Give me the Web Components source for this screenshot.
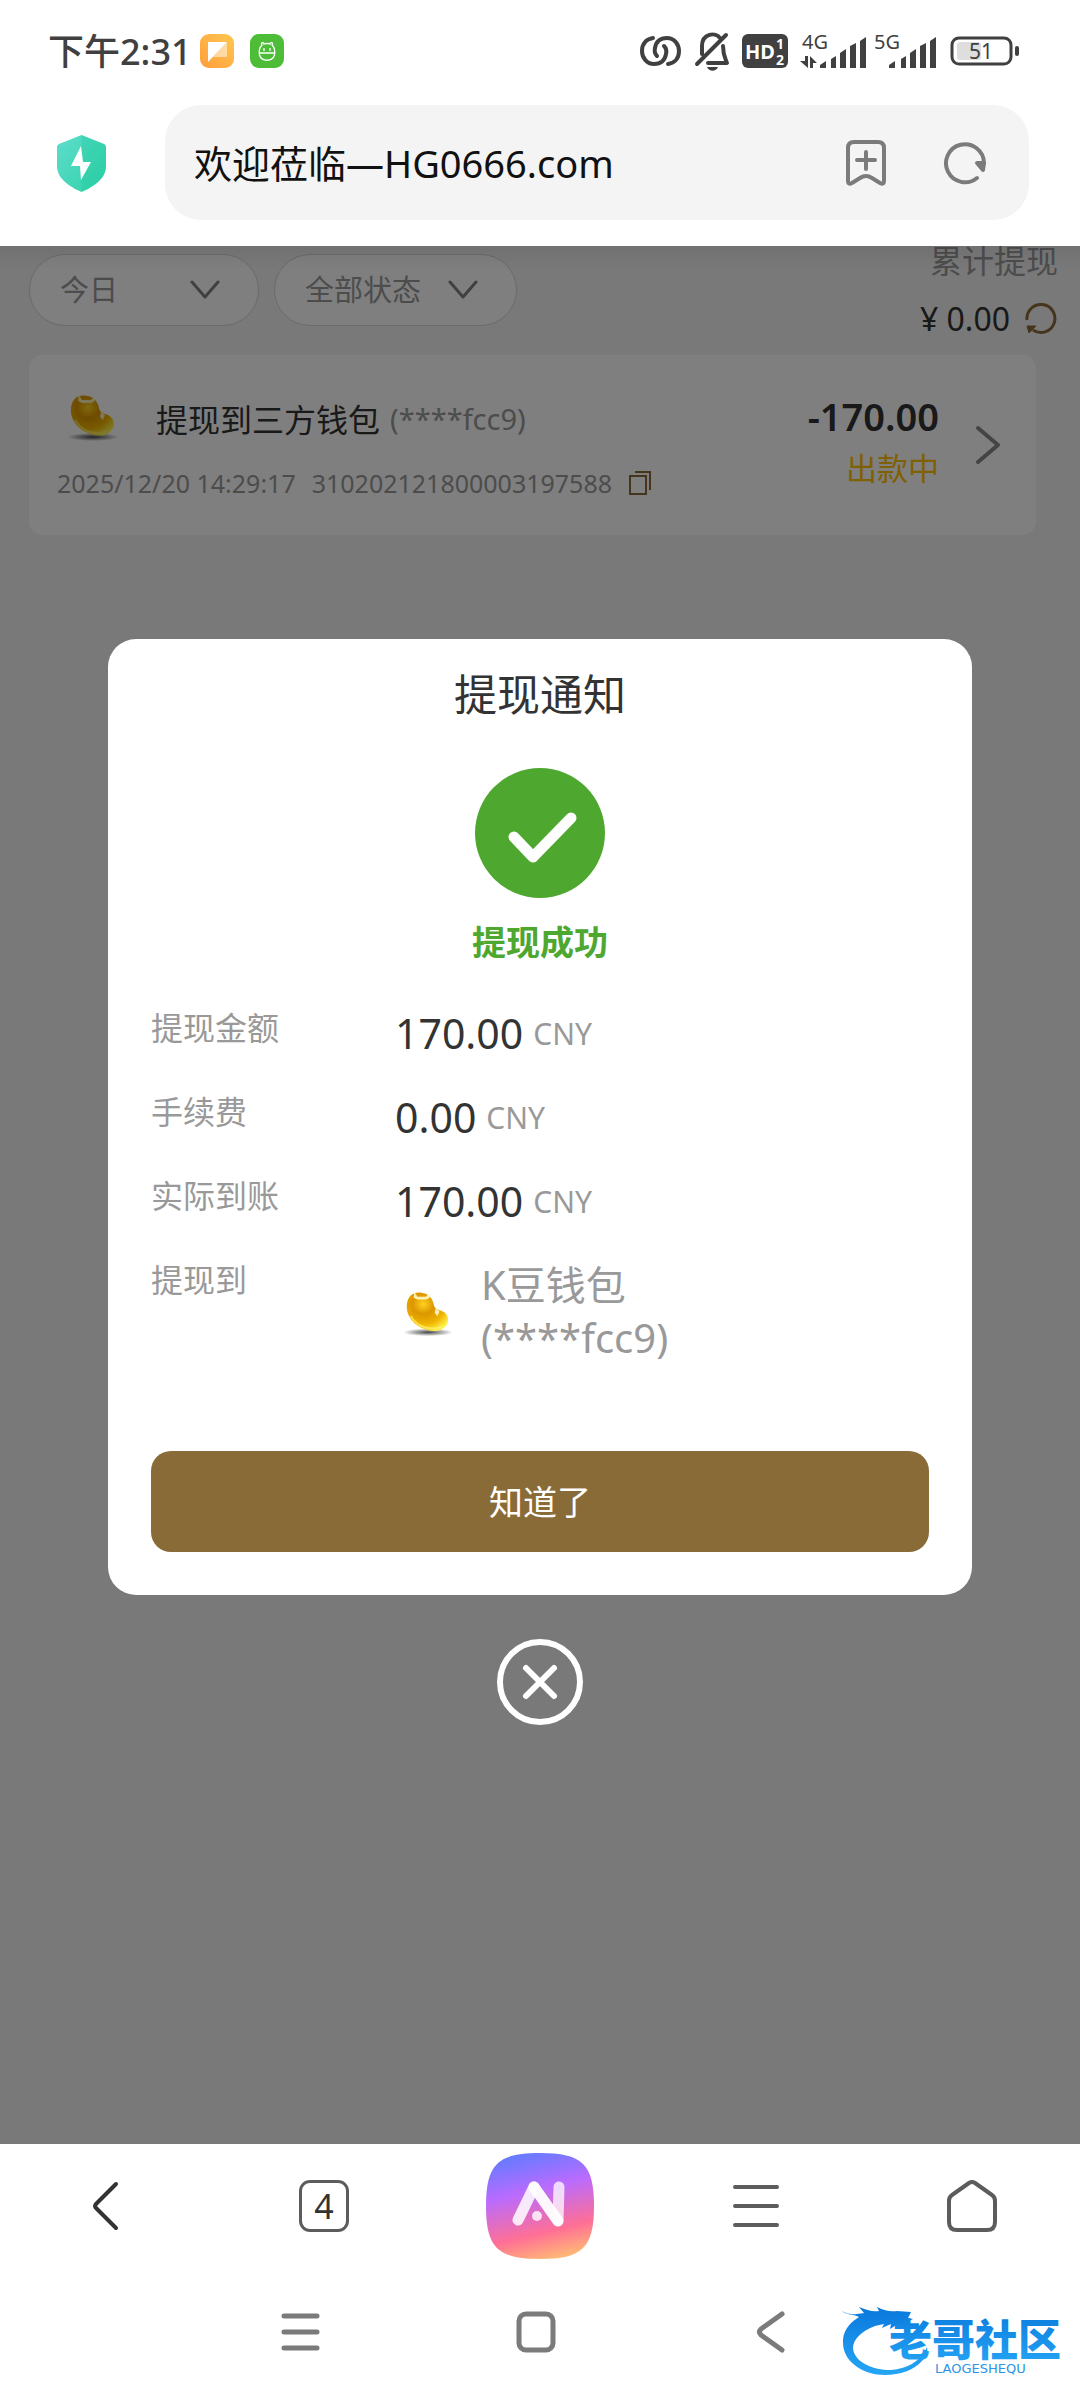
<!DOCTYPE html>
<html lang="zh-CN">
<head>
<meta charset="utf-8">
<meta name="viewport" content="width=device-width, initial-scale=1">
<title>提现通知</title>
<style>
  body {
    margin: 0;
    min-height: 100vh;
    display: flex;
    flex-direction: column;
    background: #fff;
    color: #333;
    font-family: "Noto Sans", "Noto Sans CJK SC", sans-serif;
  }
  record-page { flex: 1; }
</style>
</head>
<body>
  <status-bar></status-bar>
  <address-bar url="欢迎莅临—HG0666.com"></address-bar>

  <record-page>
    <filter-select label="日期" value="今日" size="230" slot="filters"></filter-select>
    <filter-select label="状态" value="全部状态" size="243" slot="filters"></filter-select>
    <record-card slot="records">
      <span slot="title">提现到三方钱包</span>
      <span slot="account">(****fcc9)</span>
      <span slot="time">2025/12/20 14:29:17</span>
      <span slot="order">310202121800003197588</span>
      <span slot="amount">-170.00</span>
      <span slot="state">出款中</span>
    </record-card>
    <notice-modal slot="modal">
      <span slot="title">提现通知</span>
      <span slot="result">提现成功</span>
      <detail-row label="提现金额"><money-value amount="170.00"></money-value></detail-row>
      <detail-row label="手续费"><money-value amount="0.00"></money-value></detail-row>
      <detail-row label="实际到账"><money-value amount="170.00"></money-value></detail-row>
      <detail-row label="提现到"><wallet-value>K豆钱包<br>(****fcc9)</wallet-value></detail-row>
    </notice-modal>
  </record-page>

  <browser-tools tabs="4"></browser-tools>
  <system-nav><site-mark></site-mark></system-nav>

<script>
  class StatusBar extends HTMLElement {
    constructor() {
      super();
      this.attachShadow({ mode: 'open' }).innerHTML = `
        <style>
          :host {
            display: flex;
            align-items: center;
            justify-content: space-between;
            height: 102px;
            padding: 0 60px 0 48px;
            color: #404040;
          }
          .left, .right { display: flex; align-items: center; }
          .left { gap: 16px; }
          .right { gap: 12px; }
          time { font-size: 36px; font-weight: 500; margin-right: -8px; padding-bottom: 4px; }
          svg { display: block; }
          .net { display: flex; gap: 6px; }
          .net svg { overflow: visible; }
          text { font-family: "Noto Sans", sans-serif; fill: #404040; }
        </style>
        <div class="left">
          <time>下午2:31</time>
          <svg width="34" height="34" viewBox="0 0 34 34">
            <defs><linearGradient id="o" x1="0" y1="1" x2="1" y2="0"><stop offset="0" stop-color="#ff9d3c"/><stop offset="1" stop-color="#ffc850"/></linearGradient></defs>
            <rect width="34" height="34" rx="9" fill="url(#o)"/>
            <path d="M8 8h19L8 28z" fill="#fff"/>
            <path d="M27 8v15H13z" fill="#fff" opacity=".5"/>
          </svg>
          <svg width="34" height="34" viewBox="0 0 34 34" fill="none" stroke="#fff" stroke-width="1.3">
            <rect width="34" height="34" rx="9" fill="#4dbd38" stroke="none"/>
            <path d="M12 11c-2-3 2-3 2 -1q3-1 6 0c0-2 4-2 2 1 3 3 3 7 2.500 10-2 7-13 7-15 0-.5-3-.5-7 2.500-10zM9 19h16M14 14v3M20 14v3"/>
          </svg>
        </div>
        <div class="right">
          <svg width="42" height="32" viewBox="0 0 42 32" fill="none" stroke="#404040" stroke-width="4" stroke-linecap="round">
            <path d="M13 3C6 4 2 9 2 16c0 7 5 13 12 13 7 0 11-4 12-10 1-4 0-6-2-8"/>
            <path d="M28 29c7-1 11-6 11-13C39 9 34 3 27 3c-7 0-11 4-12 10-1 4 0 6 2 8"/>
          </svg>
          <svg width="36" height="40" viewBox="0 0 36 40" fill="none" stroke="#404040" stroke-width="4" stroke-linecap="round" stroke-linejoin="round">
            <path d="M3 33 32 4M26 7C22 1 8 2 8 15v8M29 15c0 9 2 12 4 17H14"/>
            <path d="M13 36h11c-2 5-9 5-11 0z" fill="#404040" stroke="none"/>
          </svg>
          <svg width="46" height="34" viewBox="0 0 46 34">
            <rect width="46" height="34" rx="6" fill="#404040"/>
            <text x="3" y="25" font-size="20" font-weight="700" style="fill:#fff">HD</text>
            <text x="34" y="15" font-size="14" font-weight="700" style="fill:#fff">1</text>
            <text x="34" y="31" font-size="14" font-weight="700" style="fill:#fff">2</text>
          </svg>
          <div class="net">
            <svg width="68" height="36" viewBox="0 0 68 36" fill="#404040">
              <text x="2" y="16" font-size="20">4G</text>
              <path d="M5 23h3v12L0 28h5zM10 23l7 7h-4v5h-3z"/>
              <path d="M20 32l6-4v7h-6zM31 26l5-3v12h-5zM40 20l6-4v19h-6zM50 13l6-3v25h-6zM60 8l6-4v31h-6z"/>
            </svg>
            <svg width="64" height="36" viewBox="0 0 64 36" fill="#404040">
              <text x="0" y="16" font-size="20">5G</text>
              <path d="M15 32l6-4v7h-6zM27 26l5-3v12h-5zM36 20l6-4v19h-6zM46 13l6-3v25h-6zM56 8l6-4v31h-6z"/>
            </svg>
          </div>
          <svg width="70" height="30" viewBox="0 0 70 30">
            <rect x="2" y="2" width="59" height="26" rx="7" fill="#fff" stroke="#404040" stroke-width="3"/>
            <rect x="7" y="6" width="24" height="18" rx="3" fill="#dedede"/>
            <rect x="65" y="10" width="4" height="10" rx="2" fill="#404040"/>
            <text x="31" y="23" font-size="21" text-anchor="middle">51</text>
          </svg>
        </div>
      `;
    }
  }
  customElements.define('status-bar', StatusBar);

  class AddressBar extends HTMLElement {
    constructor() {
      super();
      this.attachShadow({ mode: 'open' }).innerHTML = `
        <style>
          :host {
            display: flex;
            align-items: center;
            gap: 58px;
            padding: 3px 51px 26px 56px;
          }
          svg { display: block; flex: none; }
          .box {
            flex: 1;
            min-width: 0;
            height: 115px;
            box-sizing: border-box;
            display: flex;
            align-items: center;
            gap: 54px;
            padding: 0 42px 0 29px;
            border-radius: 36px;
            background: #f4f4f4;
          }
          input {
            flex: 1;
            min-width: 0;
            padding: 0;
            border: 0;
            outline: 0;
            background: none;
            color: #111;
            font: 38px/56px "Noto Sans", "Noto Sans CJK SC", sans-serif;
          }
          button { padding: 0; border: 0; background: none; }
        </style>
        <svg width="51" height="58" viewBox="0 0 51 58">
          <defs><linearGradient id="s" x2="1" y2="1"><stop stop-color="#5fdccd"/><stop offset="1" stop-color="#2ed3a6"/></linearGradient></defs>
          <path d="M25.500 1 48 10q2 1 2 3v19c0 12-11 20-24.500 26C12 52 1 44 1 32V13q0-2 2-3z" fill="url(#s)"/>
          <path d="M25.500 1 48 10q2 1 2 3v19c0 12-11 20-24.500 26z" fill="#1fc79a" opacity=".3"/>
          <path d="M25 12 15 32h9l1 14 10-18h-8z" fill="#fff"/>
        </svg>
        <div class="box">
          <input type="text" aria-label="网址">
          <button aria-label="收藏">
            <svg width="46" height="46" viewBox="0 0 46 46" fill="none" stroke="#7b7b7b" stroke-width="4" stroke-linecap="round" stroke-linejoin="round">
              <path d="M5 8q0-6 6-6h24q6 0 6 6v33q0 4-4 2l-8-5q-6-4-12 0l-8 5q-4 2-4-2zM23 12v17M14 20h18"/>
            </svg>
          </button>
          <button aria-label="刷新">
            <svg width="44" height="44" viewBox="0 0 44 44" fill="none" stroke="#7b7b7b" stroke-width="4" stroke-linecap="round" stroke-linejoin="round">
              <path d="M34 37A19 19 0 1 1 41 22"/>
              <path d="M34 22h7l-1 7z" fill="#7b7b7b"/>
            </svg>
          </button>
        </div>
      `;
    }
    connectedCallback() {
      const input = this.shadowRoot.querySelector('input');
      input.value = this.getAttribute('url');
      input.setAttribute('value', this.getAttribute('url'));
    }
  }
  customElements.define('address-bar', AddressBar);

  class FilterSelect extends HTMLElement {
    constructor() {
      super();
      this.attachShadow({ mode: 'open' }).innerHTML = `
        <style>
          :host { display: block; }
          label {
            display: flex;
            align-items: center;
            justify-content: space-between;
            height: 72px;
            box-sizing: border-box;
            padding: 0 38px 0 30px;
            border: 1px solid #d4d4d4;
            border-radius: 36px;
            background: #fff;
          }
          select {
            flex: 1;
            min-width: 0;
            appearance: none;
            border: 0;
            padding: 0;
            background: none;
            color: #999;
            font: 29px/42px "Noto Sans", "Noto Sans CJK SC", sans-serif;
          }
          svg { flex: none; }
        </style>
        <label>
          <select><option></option></select>
          <svg width="30" height="20" viewBox="0 0 30 20" fill="none" stroke="#808080" stroke-width="3" stroke-linecap="round" stroke-linejoin="round"><path d="M2 2l13 15L28 2"/></svg>
        </label>
      `;
    }
    connectedCallback() {
      this.shadowRoot.querySelector('option').textContent = this.getAttribute('value');
      this.shadowRoot.querySelector('select').setAttribute('aria-label', this.getAttribute('label'));
      this.style.width = this.getAttribute('size') + 'px';
    }
  }
  customElements.define('filter-select', FilterSelect);

  class GoldBean extends HTMLElement {
    constructor() {
      super();
      this.attachShadow({ mode: 'open' }).innerHTML = `
        <style>
          :host { display: block; flex: none; width: 52px; }
          svg { display: block; width: 100%; }
        </style>
        <svg viewBox="0 0 52 50">
          <defs>
            <radialGradient id="a" cx=".4" cy=".3" r=".75"><stop offset="0" stop-color="#ffd21f"/><stop offset=".35" stop-color="#dc9600"/><stop offset=".7" stop-color="#f0b400"/><stop offset="1" stop-color="#fff04a"/></radialGradient>
            <radialGradient id="b"><stop stop-color="#333" stop-opacity=".9"/><stop offset="1" stop-color="#333" stop-opacity="0"/></radialGradient>
          </defs>
          <ellipse cx="26" cy="44" rx="26" ry="4" fill="url(#b)"/>
          <path d="M4 15C5 5 12 1 20 3c8 1 11 7 12 12 1 5 4 5 9 7 7 3 8 12 2 17-7 6-19 4-28-2C7 31 3 23 4 15z" fill="url(#a)"/>
          <path d="M12 2l3 5h9l3-4 1 5-4 2h-9l-4-2zM34 19l4 3-2 5-3-3z" fill="#fff8c8" opacity=".9"/>
          <path d="M8 27c6 11 20 16 32 11" fill="none" stroke="#fff36a" stroke-width="2" opacity=".7"/>
        </svg>
      `;
    }
  }
  customElements.define('gold-bean', GoldBean);

  class RecordCard extends HTMLElement {
    constructor() {
      super();
      this.attachShadow({ mode: 'open' }).innerHTML = `
        <style>
          :host {
            display: flex;
            align-items: center;
            height: 180px;
            box-sizing: border-box;
            padding: 0 35px 0 28px;
            border-radius: 14px;
            background: #fff;
          }
          .info { flex: 1; padding-top: 12px; }
          .name { display: flex; align-items: center; height: 64px; font-size: 32px; }
          gold-bean { margin: 0 37px 0 10px; }
          .account { margin-left: 10px; color: #999; font-size: 29px; }
          .meta { display: flex; align-items: center; gap: 16px; height: 66px; color: #999; font-size: 25px; }
          .sum { text-align: right; padding-bottom: 8px; }
          .amount { font-size: 38px; line-height: 54px; font-weight: 600; }
          .state { font-size: 31px; line-height: 50px; color: #ffc107; }
          button { display: flex; padding: 0; border: 0; background: none; }
          .go { margin-left: 36px; }
        </style>
        <div class="info">
          <div class="name">
            <gold-bean></gold-bean>
            <slot name="title"></slot>
            <span class="account"><slot name="account"></slot></span>
          </div>
          <div class="meta">
            <slot name="time"></slot>
            <slot name="order"></slot>
            <button aria-label="复制">
              <svg width="24" height="26" viewBox="0 0 24 26" fill="none" stroke="#8a6a38" stroke-width="2"><path d="M2 6h16v18H2zM7 2h15v18"/></svg>
            </button>
          </div>
        </div>
        <div class="sum">
          <div class="amount"><slot name="amount"></slot></div>
          <div class="state"><slot name="state"></slot></div>
        </div>
        <button class="go" aria-label="详情">
          <svg width="26" height="40" viewBox="0 0 26 40" fill="none" stroke="#888" stroke-width="4" stroke-linecap="round" stroke-linejoin="round"><path d="M3 3l20 17L3 37"/></svg>
        </button>
      `;
    }
  }
  customElements.define('record-card', RecordCard);

  class RecordPage extends HTMLElement {
    constructor() {
      super();
      this.attachShadow({ mode: 'open' }).innerHTML = `
        <style>
          :host {
            display: block;
            position: relative;
            overflow: hidden;
            background: #f3f3f3;
          }
          /* list is scrolled a little under the address bar */
          .bar {
            display: flex;
            align-items: center;
            gap: 15px;
            margin-top: -14px;
            padding: 0 22px 0 29px;
          }
          .total {
            margin-left: auto;
            font-size: 32px;
            line-height: 58px;
            text-align: right;
          }
          .total span { color: #999; }
          .sum { display: flex; align-items: center; justify-content: flex-end; gap: 14px; }
          button { display: flex; padding: 0; border: 0; background: none; }
          .list { padding: 7px 44px 0 29px; }
          .mask {
            position: absolute;
            inset: 0;
            display: flex;
            flex-direction: column;
            align-items: center;
            padding-top: 393px;
            background: linear-gradient(rgba(0,0,0,.07), rgba(0,0,0,0) 24px) rgba(0,0,0,.5);
          }
        </style>
        <div class="bar">
          <slot name="filters"></slot>
          <div class="total">
            <span>累计提现</span>
            <div class="sum">¥ 0.00
              <button aria-label="刷新余额">
                <svg width="34" height="34" viewBox="0 0 34 34" fill="none" stroke="#8a6a38" stroke-width="3"><path d="M3 18a14 14 0 1 1 6 10"/><path d="M3 24h9l-7 7z" fill="#8a6a38" stroke-width="1"/></svg>
              </button>
            </div>
          </div>
        </div>
        <div class="list"><slot name="records"></slot></div>
        <div class="mask"><slot name="modal"></slot></div>
      `;
    }
  }
  customElements.define('record-page', RecordPage);

  class MoneyValue extends HTMLElement {
    constructor() {
      super();
      this.attachShadow({ mode: 'open' }).innerHTML = `
        <style>
          :host { display: flex; align-items: center; gap: 10px; height: 84px; padding-top: 10px; box-sizing: border-box; }
          b { font-size: 41px; font-weight: 400; color: #333; }
          span { font-size: 30px; }
        </style>
        <b></b><span>CNY</span>
      `;
    }
    connectedCallback() {
      this.shadowRoot.querySelector('b').textContent = this.getAttribute('amount');
    }
  }
  customElements.define('money-value', MoneyValue);

  class WalletValue extends HTMLElement {
    constructor() {
      super();
      this.attachShadow({ mode: 'open' }).innerHTML = `
        <style>
          :host { display: flex; align-items: center; gap: 28px; padding: 20px 0 0 8px; }
          gold-bean { width: 50px; padding-top: 6px; }
          p { margin: 0; font-size: 40px; line-height: 53px; }
        </style>
        <gold-bean></gold-bean><p><slot></slot></p>
      `;
    }
  }
  customElements.define('wallet-value', WalletValue);

  class DetailRow extends HTMLElement {
    constructor() {
      super();
      this.attachShadow({ mode: 'open' }).innerHTML = `
        <style>
          :host { display: grid; grid-template-columns: 244px 1fr; color: #999; }
          .label { font-size: 32px; line-height: 84px; }
        </style>
        <span class="label"></span>
        <slot></slot>
      `;
    }
    connectedCallback() {
      this.shadowRoot.querySelector('.label').textContent = this.getAttribute('label');
    }
  }
  customElements.define('detail-row', DetailRow);

  class NoticeModal extends HTMLElement {
    constructor() {
      super();
      this.attachShadow({ mode: 'open' }).innerHTML = `
        <style>
          :host { display: flex; flex-direction: column; align-items: center; width: 80%; }
          section {
            width: 100%;
            box-sizing: border-box;
            padding: 0 43px 43px;
            border-radius: 28px;
            background: #fff;
          }
          h2 { margin: 0 0 17px; font-size: 43px; line-height: 112px; font-weight: 400; text-align: center; }
          .ok { display: block; margin: 0 auto 20px; }
          .result { text-align: center; font-size: 34px; line-height: 48px; font-weight: 700; color: #4ea82f; }
          .rows { padding: 20px 0 87px; }
          .know {
            display: block;
            width: 100%;
            height: 101px;
            border: 0;
            border-radius: 20px;
            background: #896b38;
            color: #fff;
            font: 34px/48px "Noto Sans", "Noto Sans CJK SC", sans-serif;
          }
          .close { display: flex; margin-top: 44px; padding: 0; border: 0; background: none; }
        </style>
        <section role="dialog" aria-labelledby="t">
          <h2 id="t"><slot name="title"></slot></h2>
          <svg class="ok" width="130" height="130" viewBox="0 0 130 130">
            <circle cx="65" cy="65" r="65" fill="#4ea82f"/>
            <path d="M39 69l19 20 38-39" fill="none" stroke="#fff" stroke-width="11" stroke-linecap="round" stroke-linejoin="round"/>
          </svg>
          <div class="result"><slot name="result"></slot></div>
          <div class="rows"><slot></slot></div>
          <button class="know">知道了</button>
        </section>
        <button class="close" aria-label="关闭">
          <svg width="86" height="86" viewBox="0 0 86 86" fill="none" stroke="#fff" stroke-width="6" stroke-linecap="round">
            <circle cx="43" cy="43" r="40"/>
            <path d="M29 29l28 28M57 29L29 57"/>
          </svg>
        </button>
      `;
    }
  }
  customElements.define('notice-modal', NoticeModal);

  class BrowserTools extends HTMLElement {
    constructor() {
      super();
      this.attachShadow({ mode: 'open' }).innerHTML = `
        <style>
          :host {
            display: grid;
            grid-template-columns: repeat(5, 1fr);
            height: 124px;
            background: #fff;
          }
          button { display: flex; align-items: center; justify-content: center; padding: 0; border: 0; background: none; }
          .tabs {
            width: 50px;
            height: 52px;
            box-sizing: border-box;
            border: 3px solid #5c5c5c;
            border-radius: 11px;
            color: #333;
            font: 34px/46px "Noto Sans", sans-serif;
          }
        </style>
        <button aria-label="后退">
          <svg width="34" height="52" viewBox="0 0 34 52" fill="none" stroke="#333" stroke-width="4" stroke-linecap="round" stroke-linejoin="round"><path d="M25 4 5 24q-2 2 0 4l20 20"/></svg>
        </button>
        <button aria-label="标签页"><span class="tabs"></span></button>
        <button aria-label="AI">
          <svg width="108" height="106" viewBox="0 0 108 106">
            <defs>
              <linearGradient id="g" x1=".35" y1="0" x2=".6" y2="1"><stop offset="0" stop-color="#657bff"/><stop offset=".35" stop-color="#b96bff"/><stop offset=".75" stop-color="#ff6f95"/><stop offset="1" stop-color="#ffb677"/></linearGradient>
            </defs>
            <path d="M54 0c42 0 54 11 54 53s-12 53-54 53S0 95 0 53 12 0 54 0z" fill="url(#g)"/>
            <g fill="none" stroke="#fff" stroke-width="11" stroke-linecap="round" stroke-linejoin="round">
              <path d="M32 67 48 34" opacity=".85"/>
              <path d="M73 34 72 67" opacity=".75"/>
              <path d="M48 34 72 68" opacity=".95"/>
            </g>
            <circle cx="51" cy="63" r="5" fill="#fff" opacity=".8"/>
          </svg>
        </button>
        <button aria-label="菜单">
          <svg width="46" height="44" viewBox="0 0 46 44" stroke="#5c5c5c" stroke-width="4" stroke-linecap="round"><path d="M2 3h42M2 22h42M2 41h42"/></svg>
        </button>
        <button aria-label="主页">
          <svg width="52" height="54" viewBox="0 0 52 54" fill="none" stroke="#5c5c5c" stroke-width="4" stroke-linejoin="round"><path d="M23 4 6 16q-3 2-3 6v21q0 8 8 8h30q8 0 8-8V22q0-4-3-6L29 4q-3-2-6 0z"/></svg>
        </button>
      `;
    }
    connectedCallback() {
      this.shadowRoot.querySelector('.tabs').textContent = this.getAttribute('tabs');
    }
  }
  customElements.define('browser-tools', BrowserTools);

  class SystemNav extends HTMLElement {
    constructor() {
      super();
      this.attachShadow({ mode: 'open' }).innerHTML = `
        <style>
          :host {
            position: relative;
            display: flex;
            justify-content: center;
            align-items: center;
            gap: 196px;
            height: 132px;
            padding: 0 8px 4px 0;
            box-sizing: border-box;
            background: #fff;
          }
          button { display: flex; justify-content: center; width: 40px; padding: 0; border: 0; background: none; }
          svg { fill: none; stroke: #7b7b7b; stroke-width: 5; stroke-linecap: round; stroke-linejoin: round; }
          /* watermark lies over the bar */
          ::slotted(site-mark) { position: absolute; right: 15px; bottom: 24px; }
        </style>
        <button aria-label="最近任务"><svg width="40" height="42" viewBox="0 0 40 42"><path d="M4 5h33M4 21h33M4 37h33"/></svg></button>
        <button aria-label="主屏幕"><svg width="40" height="42" viewBox="0 0 40 42"><rect x="3" y="3" width="34" height="36" rx="7"/></svg></button>
        <button aria-label="返回"><svg width="40" height="42" viewBox="0 0 40 42"><path d="M30 3 9 18q-3 3 0 6l21 15"/></svg></button>
        <slot></slot>
      `;
    }
  }
  customElements.define('system-nav', SystemNav);

  class SiteMark extends HTMLElement {
    constructor() {
      super();
      this.attachShadow({ mode: 'open' }).innerHTML = `
        <style>
          :host { display: block; }
          svg { display: block; overflow: visible; }
          text { font-family: "Noto Sans CJK SC", sans-serif; }
          .en { font-family: "DejaVu Sans", sans-serif; }
        </style>
        <svg width="224" height="72" viewBox="0 0 224 72">
          <defs><linearGradient id="m" x2="0" y2="1"><stop stop-color="#0a78dc"/><stop offset="1" stop-color="#25a6f5"/></linearGradient></defs>
          <path d="M1 7c8 5 14 3 22 2L18 3c8 3 13 5 20 4l-2-4c8 4 14 5 20 4l14 1-3 6 5 1-6 3 5 3-14-1-8 5 1-5-9 4 2-4-9 2C21 27 12 35 12 44c1 13 17 21 34 22 18 0 34-8 40-23 1 5-1 10-5 14-8 9-22 14-37 14C22 71 3 58 2 40 1 28 8 19 18 13 12 10 5 11 1 7z" fill="url(#m)"/>
          <text x="48" y="52" font-size="43" font-weight="900" fill="url(#m)">老哥社区</text>
          <text class="en" x="94" y="69" font-size="13" fill="#2d95e6">LAOGESHEQU</text>
        </svg>
      `;
    }
  }
  customElements.define('site-mark', SiteMark);
</script>
</body>
</html>
